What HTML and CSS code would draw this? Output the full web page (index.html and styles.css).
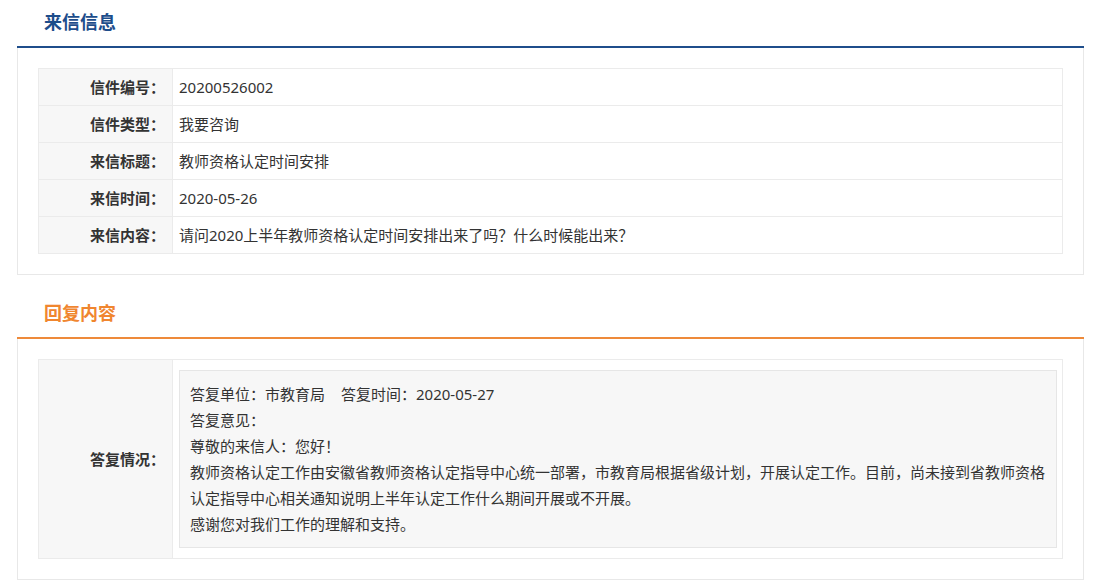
FILE: index.html
```html
<!DOCTYPE html>
<html lang="zh-CN">
<head>
<meta charset="utf-8">
<title>来信信息</title>
<link rel="stylesheet" href="styles.css">
</head>
<body>
<div class="page">
  <section class="section">
    <div class="sec-head sec-head--blue"><h2 class="sec-title">来信信息</h2></div>
    <div class="panel">
      <table class="info">
        <tr><th>信件编号：</th><td>20200526002</td></tr>
        <tr><th>信件类型：</th><td>我要咨询</td></tr>
        <tr><th>来信标题：</th><td>教师资格认定时间安排</td></tr>
        <tr><th>来信时间：</th><td>2020-05-26</td></tr>
        <tr><th>来信内容：</th><td>请问2020上半年教师资格认定时间安排出来了吗？什么时候能出来？</td></tr>
      </table>
    </div>
  </section>
  <section class="section section--reply">
    <div class="sec-head sec-head--orange"><h2 class="sec-title">回复内容</h2></div>
    <div class="panel">
      <table class="info">
        <tr>
          <th>答复情况：</th>
          <td class="reply-cell">
            <div class="reply-box">
              <p>答复单位：市教育局<span class="gap"></span>答复时间：2020-05-27</p>
              <p>答复意见：</p>
              <p>尊敬的来信人：您好！</p>
              <p>教师资格认定工作由安徽省教师资格认定指导中心统一部署，市教育局根据省级计划，开展认定工作。目前，尚未接到省教师资格认定指导中心相关通知说明上半年认定工作什么期间开展或不开展。</p>
              <p>感谢您对我们工作的理解和支持。</p>
            </div>
          </td>
        </tr>
      </table>
    </div>
  </section>
</div>
</body>
</html>
```

FILE: styles.css
```css
* { box-sizing: border-box; }
html, body { margin: 0; padding: 0; background: #fff; }
body {
  font-family: "Noto Sans", "Noto Sans CJK SC", sans-serif;
  color: #333;
  font-size: 15px;
}
.page {
  width: 1067px;
  margin-left: 17px;
}
.section--reply { margin-top: 16px; }
.sec-head {
  height: 48px;
  padding-left: 27px;
  padding-bottom: 4px;
  border-bottom: 2px solid #1f4e8b;
  display: flex;
  align-items: center;
}
.sec-head--orange { border-bottom-color: #ee8a3a; }
.sec-title {
  margin: 0;
  font-family: "Noto Sans CJK SC", sans-serif;
  font-size: 18px;
  font-weight: bold;
  line-height: 24px;
  color: #1d4d8b;
}
.sec-head--orange .sec-title { color: #f0862f; }
.panel {
  border: 1px solid #e8e8e8;
  border-top: none;
  padding: 20px;
}
.info {
  width: 100%;
  border-collapse: collapse;
  border: 1px solid #ebebeb;
}
.info th, .info td {
  border: 1px solid #ebebeb;
  height: 37px;
  line-height: 20px;
  padding: 0;
}
.info th {
  width: 134px;
  background: #f7f7f7;
  text-align: right;
  padding-right: 7px;
  font-family: "Noto Sans CJK SC", sans-serif;
  font-weight: bold;
  color: #333;
  vertical-align: middle;
}
.info td {
  padding-left: 6px;
  color: #333;
}
.info td.reply-cell { padding: 10px 5px 10px 6px; }
.reply-box {
  background: #f7f7f7;
  border: 1px solid #e6e6e6;
  padding: 10px;
}
.reply-box p {
  margin: 0;
  line-height: 26px;
}
.gap { display: inline-block; width: 16px; }
```
